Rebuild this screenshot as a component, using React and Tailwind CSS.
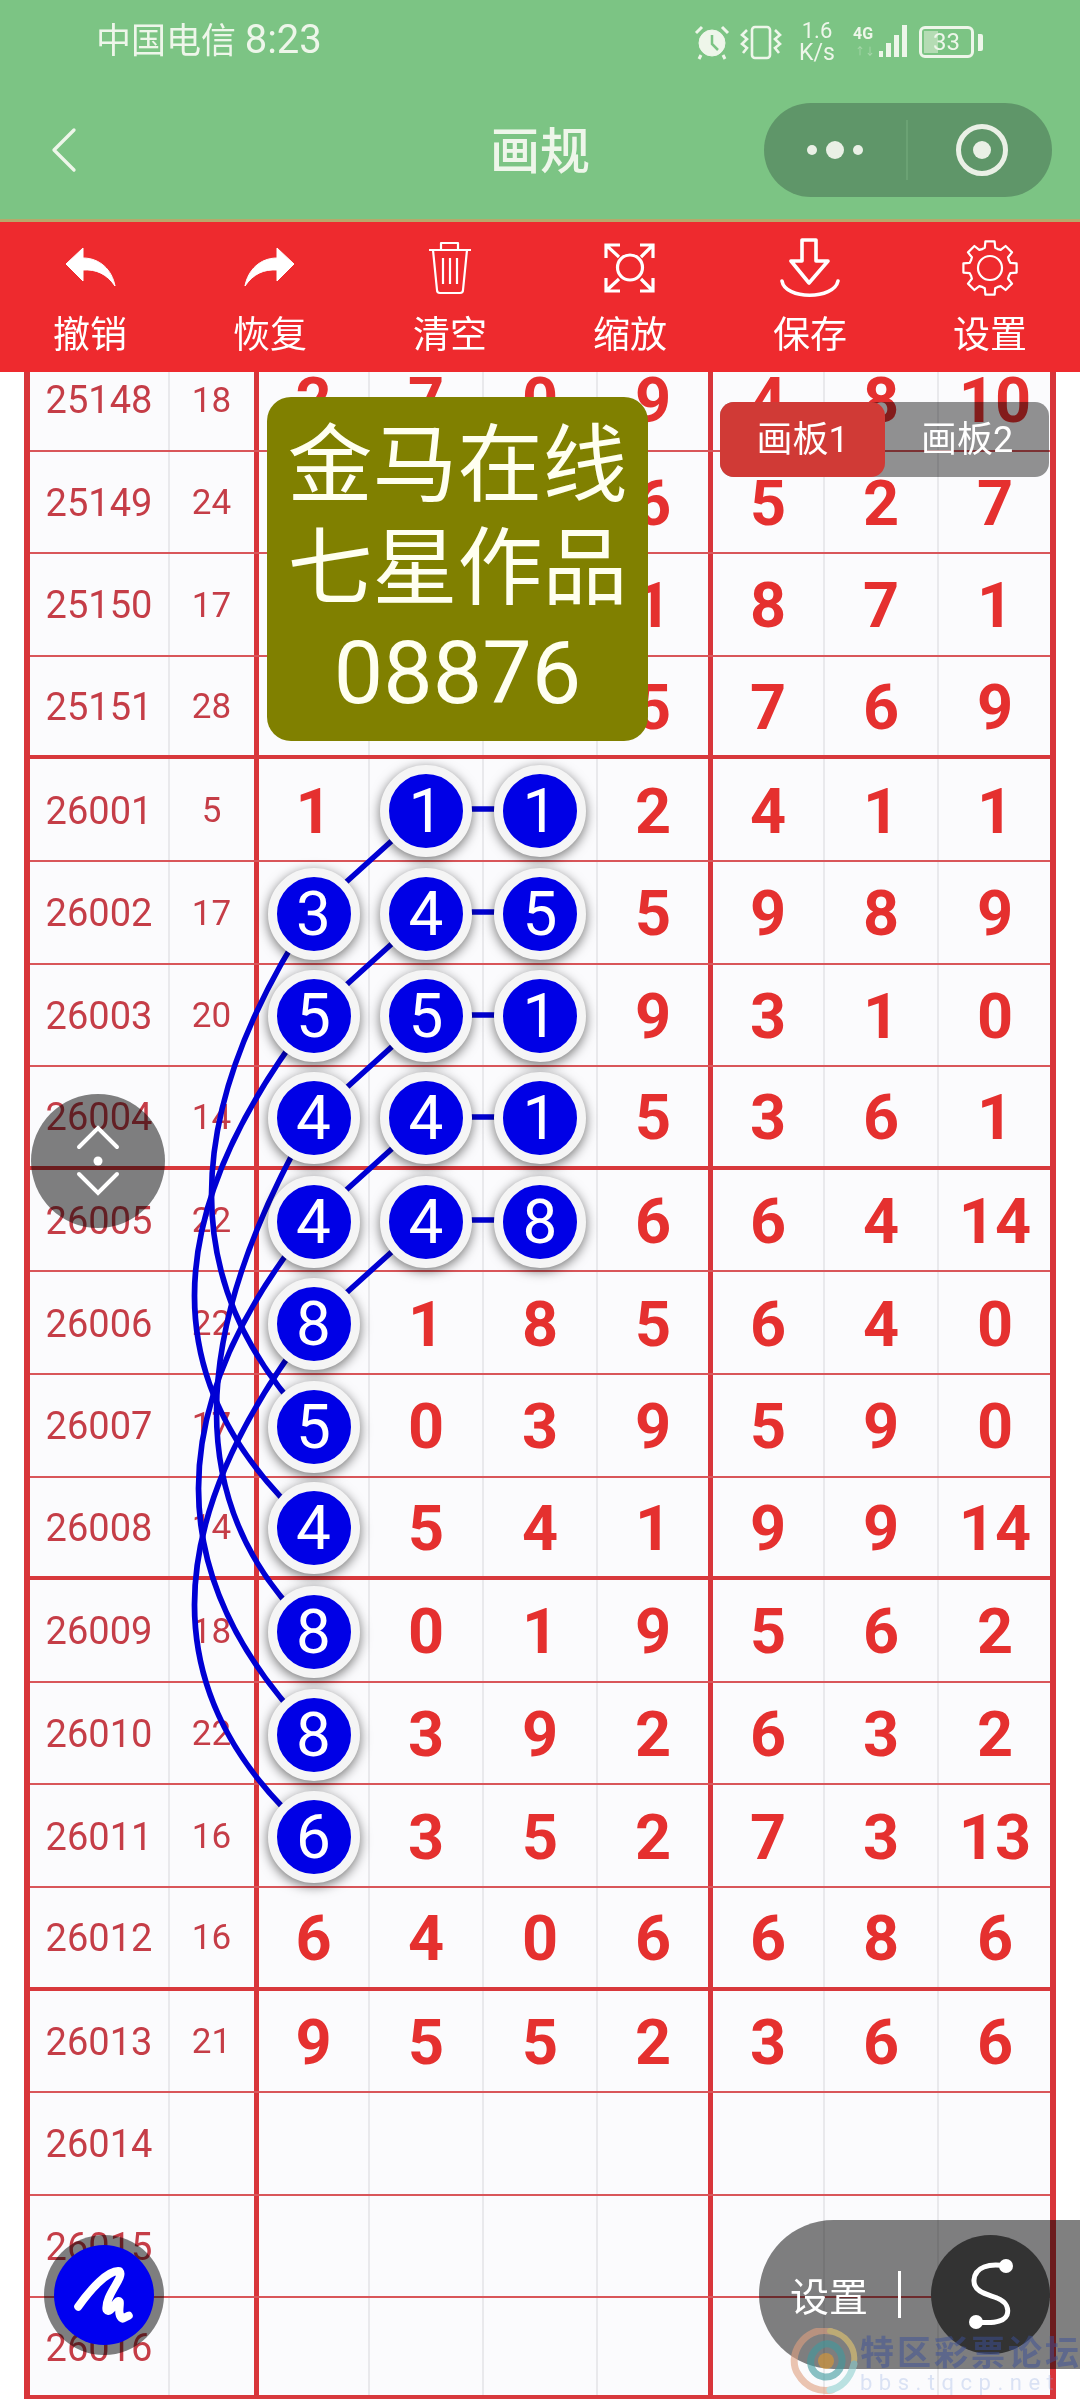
import { ChevronLeft } from "lucide-react";

const rows = [
  { id: "25148", sum: "18", nums: ["2", "7", "0", "9", "4", "8", "10"] },
  { id: "25149", sum: "24", nums: ["", "", "", "6", "5", "2", "7"] },
  { id: "25150", sum: "17", nums: ["", "", "", "1", "8", "7", "1"] },
  { id: "25151", sum: "28", nums: ["", "", "", "5", "7", "6", "9"] },
  { id: "26001", sum: "5", nums: ["1", "1", "1", "2", "4", "1", "1"], balls: [1, 2] },
  { id: "26002", sum: "17", nums: ["3", "4", "5", "5", "9", "8", "9"], balls: [0, 1, 2] },
  { id: "26003", sum: "20", nums: ["5", "5", "1", "9", "3", "1", "0"], balls: [0, 1, 2] },
  { id: "26004", sum: "14", nums: ["4", "4", "1", "5", "3", "6", "1"], balls: [0, 1, 2] },
  { id: "26005", sum: "22", nums: ["4", "4", "8", "6", "6", "4", "14"], balls: [0, 1, 2] },
  { id: "26006", sum: "22", nums: ["8", "1", "8", "5", "6", "4", "0"], balls: [0] },
  { id: "26007", sum: "17", nums: ["5", "0", "3", "9", "5", "9", "0"], balls: [0] },
  { id: "26008", sum: "14", nums: ["4", "5", "4", "1", "9", "9", "14"], balls: [0] },
  { id: "26009", sum: "18", nums: ["8", "0", "1", "9", "5", "6", "2"], balls: [0] },
  { id: "26010", sum: "22", nums: ["8", "3", "9", "2", "6", "3", "2"], balls: [0] },
  { id: "26011", sum: "16", nums: ["6", "3", "5", "2", "7", "3", "13"], balls: [0] },
  { id: "26012", sum: "16", nums: ["6", "4", "0", "6", "6", "8", "6"] },
  { id: "26013", sum: "21", nums: ["9", "5", "5", "2", "3", "6", "6"] },
  { id: "26014", sum: "", nums: ["", "", "", "", "", "", ""] },
  { id: "26015", sum: "", nums: ["", "", "", "", "", "", ""] },
  { id: "26016", sum: "", nums: ["", "", "", "", "", "", ""] },
];

const gearPath = () => {
  let d = "";
  for (let i = 0; i < 8; i++) {
    const a = (i * Math.PI) / 4;
    const pts = [
      [20.5, a - 0.39],
      [21, a - 0.25],
      [27, a - 0.17],
      [27, a + 0.17],
      [21, a + 0.25],
      [20.5, a + 0.39],
    ];
    pts.forEach(([r, t]) => {
      d += `${d ? "L" : "M"}${(30 + r * Math.cos(t)).toFixed(1)} ${(30 + r * Math.sin(t)).toFixed(1)} `;
    });
  }
  return d + "Z";
};

const UndoArrow = ({ flip }) => (
  <svg viewBox="0 0 60 60" className={flip ? "w-[60px] h-[60px] -scale-x-100" : "w-[60px] h-[60px]"}>
    <path d="M6 26 L23 10 L23 20 C40 20 52 32 55 48 C47 36 36 31 23 32 L23 43 Z" fill="#fff" stroke="#fff" strokeWidth="1" strokeLinejoin="round" />
  </svg>
);

const TrashIcon = () => (
  <svg viewBox="0 0 60 60" className="w-[60px] h-[60px]" fill="none" stroke="#fff" strokeWidth="2.2" strokeLinejoin="round">
    <path d="M9 12 H51 M21 12 V5 H38 V12 M13 12 L17 52 Q17 55 20 55 H40 Q43 55 43 52 L47 12 M23 20 V46 M30 20 V46 M37 20 V46" />
  </svg>
);

const ZoomIcon = () => (
  <svg viewBox="0 0 60 60" className="w-[60px] h-[60px]" fill="none" stroke="#fff" strokeWidth="3.2">
    <circle cx="30" cy="29.5" r="12.5" />
    <path d="M6 20 V7 H20 M6 7 L19 19 M40 7 H53 V20 M53 7 L41 19 M6 40 V53 H20 M6 53 L19 41 M40 53 H53 V40 M53 53 L41 41" />
  </svg>
);

const SaveIcon = () => (
  <svg viewBox="0 0 60 60" className="w-[60px] h-[60px]" fill="none" stroke="#fff" strokeWidth="3.6" strokeLinejoin="round" strokeLinecap="round">
    <path d="M22 2 H36 V23 H48 L29 45 L11 23 H22 Z" />
    <path d="M2 43 C5 62 54 62 58 43" />
  </svg>
);

const GearIcon = () => (
  <svg viewBox="0 0 60 60" className="w-[60px] h-[60px]" fill="none" stroke="#fff" strokeWidth="2.2" strokeLinejoin="round">
    <path d={gearPath()} />
    <circle cx="30" cy="30" r="12" />
  </svg>
);

const tools = [
  { label: "撤销", icon: <UndoArrow /> },
  { label: "恢复", icon: <UndoArrow flip /> },
  { label: "清空", icon: <TrashIcon /> },
  { label: "缩放", icon: <ZoomIcon /> },
  { label: "保存", icon: <SaveIcon /> },
  { label: "设置", icon: <GearIcon /> },
];

const StatusIcons = () => (
  <div className="flex items-center text-[#eef6ea]">
    {/* alarm */}
    <svg viewBox="0 0 36 36" className="w-[36px] h-[36px]" fill="none" stroke="currentColor">
      <circle cx="18" cy="19" r="13" fill="currentColor" />
      <path d="M18 11 V20 L24 26" stroke="#7cc484" strokeWidth="2.5" />
      <path d="M2 9 L8 3 M34 9 L28 3 M7 31 L5 35 M29 31 L31 35" strokeWidth="3" />
    </svg>
    {/* vibrate */}
    <svg viewBox="0 0 44 36" className="w-[44px] h-[36px] ml-[9px]" fill="none" stroke="currentColor" strokeWidth="2.6">
      <rect x="13" y="3" width="18" height="31" rx="3" />
      <path d="M8 6 L3 11 L8 15 L3 20 L8 24 L4 29 M36 6 L41 11 L36 15 L41 20 L36 24 L40 29" />
    </svg>
    <div className="flex flex-col items-center ml-[15px] w-[38px] leading-none">
      <span className="text-[22px] leading-[22px]">1.6</span>
      <span className="text-[23px] leading-[22px]">K/s</span>
    </div>
    {/* network */}
    <div className="relative w-[54px] h-[36px] ml-[17px]">
      <span className="absolute left-0 top-[2px] text-[16px] leading-none font-bold">4G</span>
      <span className="absolute left-[2px] top-[23px] text-[10px] leading-none opacity-40">↑↓</span>
      <div className="absolute right-0 bottom-[3px] flex items-end gap-[3px]">
        <div className="w-[4px] h-[6px] bg-[#eef6ea]" />
        <div className="w-[5px] h-[14px] bg-[#eef6ea]" />
        <div className="w-[5px] h-[22px] bg-[#eef6ea]" />
        <div className="w-[5px] h-[32px] bg-[#eef6ea]" />
      </div>
    </div>
    {/* battery */}
    <div className="relative flex items-center justify-center w-[55px] h-[32px] ml-[12px] border-[3px] border-[#eef6ea] rounded-[6px] text-[24px] leading-none">
      <div className="absolute left-[2px] top-[2px] bottom-[2px] w-[14px] bg-[#b5dcb4]" />
      <span className="relative">33</span>
    </div>
    <div className="w-[5px] h-[17px] ml-[4px] bg-[#eef6ea] rounded-r-[2px]" />
  </div>
);

const Ball = ({ value }) => (
  <div className="relative flex items-center justify-center w-[92px] h-[92px] rounded-full bg-[#0000e6] border-[9px] border-[#f5f5f5] shadow-[0_3px_12px_rgba(0,0,0,0.55)] text-white text-[62px] leading-none font-normal">
    {value}
  </div>
);

const Row = ({ row, index }) => {
  const thick = index % 4 === 3;
  return (
    <div
      className={`grid grid-cols-[140px_89px_111px_114px_114px_115px_112px_114px_112px] ${
        index === 19 ? "h-[101px]" : "h-[102.6px]"
      } ${thick ? "border-b-[4px] border-[#d8383c]" : "border-b-2 border-[#d9565a]"}`}
    >
      <div className="flex items-center justify-center pt-[3px] border-r-2 border-[#e9e9ec] text-[38px] text-[#c53d47]">{row.id}</div>
      <div className="flex items-center justify-center pt-[3px] border-r-[5px] border-[#d8353a] pr-[1px] text-[35px] text-[#c53d47]">{row.sum}</div>
      {row.nums.map((n, i) => (
        <div
          key={i}
          className={`flex items-center justify-center pt-[3px] text-[63px] leading-none font-bold text-[#e5302f] ${
            i === 3 ? "border-r-[5px] border-[#d8353a]" : i === 6 ? "" : "border-r-2 border-[#e9e9ec]"
          }`}
        >
          {row.balls && row.balls.includes(i) ? <Ball value={n} /> : n}
        </div>
      ))}
    </div>
  );
};

const Links = () => {
  const ys = [809, 912, 1015, 1117, 1220, 1323, 1426, 1528, 1631, 1734, 1836];
  return (
    <svg viewBox="0 372 1080 2028" className="absolute left-0 top-0 w-[1080px] h-[2028px]" fill="none" stroke="#0000d4" strokeWidth="5.5">
      {ys.slice(0, 5).map((y) => (
        <path key={y} d={`M427 ${y} H541 M427 ${y} L313 ${y + 103}`} />
      ))}
      <path d="M313 912 Q110 1220 313 1426" />
      <path d="M313 1015 Q76 1320 313 1528" />
      <path d="M313 1117 Q120 1450 313 1631" />
      <path d="M313 1220 Q84 1500 313 1734" />
      <path d="M313 1323 Q76 1630 313 1836" />
    </svg>
  );
};

export default function App() {
  return (
    <div className="relative w-[1080px] h-[2400px] overflow-hidden bg-white font-['Roboto','Noto_Sans_CJK_SC',sans-serif]">
      <header className="h-[222px] bg-[#7cc484] border-b-[3px] border-[#b8a86a]">
        <div className="flex items-center justify-between h-[84px] pl-[96px] pr-[97px] text-[35px] text-[#eef6ea]">
          <span>
            中国电信 <span className="text-[40px] leading-none">8:23</span>
          </span>
          <StatusIcons />
        </div>
        <div className="relative flex items-center justify-center h-[94px] mt-[19px]">
          <ChevronLeft className="absolute left-[24px] top-[7px] w-[80px] h-[80px] text-[#eef6ea]" strokeWidth={1} />
          <span className="text-[50px] font-medium pt-[5px] text-[#eef6ea]">画规</span>
          <div className="absolute left-[764px] top-0 flex items-center w-[288px] h-[94px] rounded-full bg-[#5f9669]">
            <div className="flex items-center justify-center shrink-0 gap-[9px] w-[144px] border-r-2 h-[60px] border-[#6ba274]">
              <div className="w-[10px] h-[10px] rounded-full bg-[#eaf0e6]" />
              <div className="w-[18px] h-[18px] rounded-full bg-[#eaf0e6]" />
              <div className="w-[10px] h-[10px] rounded-full bg-[#eaf0e6]" />
            </div>
            <div className="flex items-center justify-center shrink-0 w-[148px]">
              <div className="flex items-center justify-center w-[52px] h-[52px] rounded-full border-[5px] border-[#eaf0e6]">
                <div className="w-[18px] h-[18px] rounded-full bg-[#eaf0e6]" />
              </div>
            </div>
          </div>
        </div>
      </header>

      <nav className="grid grid-cols-6 h-[150px] bg-[#ee2a2e] text-white">
        {tools.map((t) => (
          <div key={t.label} className="flex flex-col items-center pt-[16px]">
            {t.icon}
            <span className="text-[37px] leading-[50px] mt-[13px]">{t.label}</span>
          </div>
        ))}
      </nav>

      <main className="relative h-[2028px] overflow-hidden">
        <Links />
        <div className="w-[1032px] ml-[24px] -mt-[23px] border-x-[6px] border-[#d8353a] bg-[#fbfbfd]">
          {rows.map((r, i) => (
            <Row key={r.id} row={r} index={i} />
          ))}
        </div>
      </main>

      {/* note over the table */}
      <div className="absolute left-[267px] top-[397px] flex flex-col items-center justify-center w-[381px] h-[344px] rounded-[24px] bg-[#808000] text-[#fffff0] text-[85px] leading-[103px]">
        <span>金马在线</span>
        <span>七星作品</span>
        <span className="text-[88px]">08876</span>
      </div>

      {/* board tabs */}
      <div className="absolute left-[720px] top-[402px] w-[329px] h-[75px] rounded-[14px] bg-[#929292] mix-blend-multiply" />
      <div className="absolute left-[720px] top-[402px] flex w-[329px] h-[75px] text-[36px] text-white">
        <div className="flex items-center justify-center w-[165px] rounded-[14px] bg-[#d03a36]">画板1</div>
        <div className="flex items-center justify-center flex-1">画板2</div>
      </div>

      {/* up/down handle */}
      <div className="absolute left-[31px] top-[1094px] w-[134px] h-[134px] rounded-full bg-[#808080] mix-blend-multiply" />
      <svg viewBox="0 0 134 134" className="absolute left-[31px] top-[1094px] w-[134px] h-[134px]" fill="none" stroke="#fff" strokeWidth="4" strokeLinecap="round">
        <path d="M48 53 L67 34 L86 53 M48 80 L67 99 L86 80" />
        <circle cx="67" cy="67" r="4.5" fill="#fff" stroke="none" />
      </svg>

      {/* brush button */}
      <div className="absolute left-[44px] top-[2235px] w-[120px] h-[120px] rounded-full bg-[#808080] mix-blend-multiply" />
      <div className="absolute left-[54px] top-[2245px] w-[100px] h-[100px] rounded-full bg-[#0000f0]">
        <svg viewBox="0 0 99 99" className="w-full h-full" fill="none" stroke="#fff" strokeWidth="8" strokeLinecap="round" strokeLinejoin="round">
          <path d="M24 61 C36 44 54 24 65 26 C70 32 50 50 52 64 C56 70 62 52 65 56 C66 60 62 70 68 73 L74 70" />
        </svg>
      </div>

      {/* settings pill */}
      <div className="absolute left-[759px] top-[2220px] w-[321px] h-[149px] rounded-l-[75px] bg-[#808080] mix-blend-multiply" />
      <div className="absolute left-[759px] top-[2220px] flex items-center w-[321px] h-[149px] text-white">
        <span className="ml-[31px] pt-[8px] text-[39px] leading-none">设置</span>
        <div className="w-[3px] h-[47px] ml-[30px] bg-white" />
        <div className="flex items-center justify-center w-[119px] h-[119px] ml-[30px] rounded-full bg-[#333333]">
          <svg viewBox="0 0 119 119" className="w-full h-full" fill="none" stroke="#fff" strokeWidth="5" strokeLinecap="round">
            <path d="M75 31 C58 28 44 32 43 45 C42 58 60 60 66 63 C76 67 78 74 76 80 C72 89 56 88 45 87" />
            <circle cx="75" cy="31" r="7" fill="#fff" stroke="none" />
            <circle cx="45" cy="87" r="7" fill="#fff" stroke="none" />
          </svg>
        </div>
      </div>

      {/* forum watermark */}
      <svg viewBox="0 0 68 66" className="absolute left-[790px] top-[2328px] w-[68px] h-[66px] opacity-60" fill="none" strokeLinecap="round">
        <path d="M40 3 C14 -2 -4 28 8 46 C16 60 30 64 42 62" stroke="#e0a080" strokeWidth="7" />
        <path d="M40 3 C56 6 66 20 64 34" stroke="#e6c870" strokeWidth="6" />
        <path d="M64 36 C60 52 50 60 40 62" stroke="#8fd0d0" strokeWidth="7" />
        <path d="M30 18 C16 28 18 46 34 49 C48 50 56 36 50 24 C46 17 38 14 32 17" stroke="#3f9a9e" strokeWidth="7" />
        <circle cx="36" cy="33" r="8" fill="#e09a30" />
      </svg>
      <div className="absolute left-[860px] top-[2334px] w-[220px] whitespace-nowrap">
        <div className="text-[34px] leading-[38px] font-bold tracking-[3px] text-[#3c5098]/50">特区彩票论坛</div>
        <div className="text-[22px] leading-[22px] tracking-[6.5px] text-[#8fa8e0]/30">bbs.tqcp.net</div>
      </div>
    </div>
  );
}
